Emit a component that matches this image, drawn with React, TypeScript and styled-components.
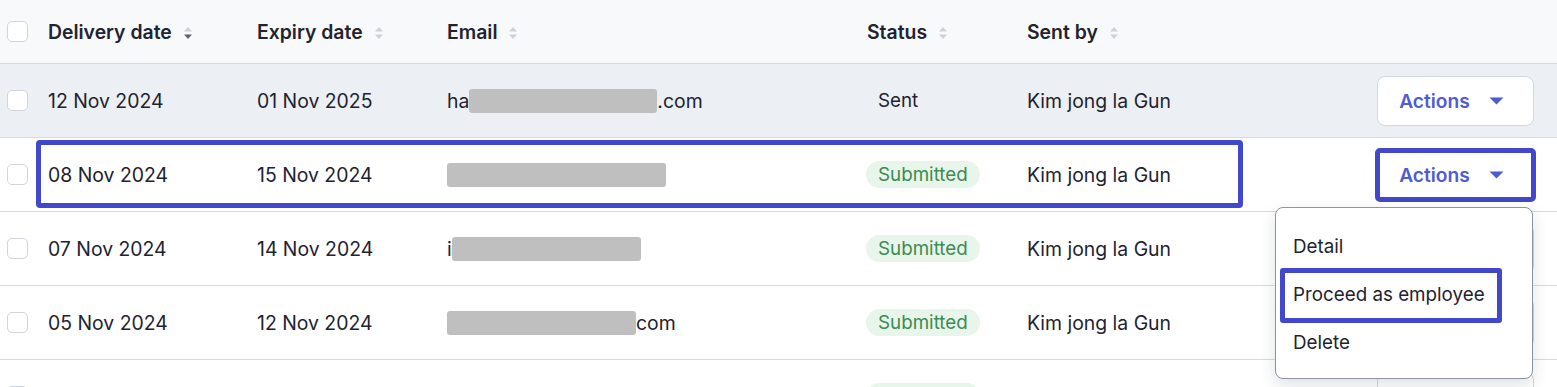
import styled, { createGlobalStyle } from "styled-components";

const GlobalStyle = createGlobalStyle`
  html, body {
    margin: 0;
    padding: 0;
    background: #ffffff;
    font-family: Inter, "Noto Sans", "Liberation Sans", sans-serif;
    color: #1e2330;
    overflow: hidden;
  }
`;

type Invite = {
  delivery: string;
  expiry: string;
  emailHead: string;
  blurWidth: number;
  emailTail: string;
  status: "Sent" | "Submitted";
  sentBy: string;
};

const rows: Invite[] = [
  { delivery: "12 Nov 2024", expiry: "01 Nov 2025", emailHead: "ha", blurWidth: 188, emailTail: ".com", status: "Sent", sentBy: "Kim jong la Gun" },
  { delivery: "08 Nov 2024", expiry: "15 Nov 2024", emailHead: "", blurWidth: 219, emailTail: "", status: "Submitted", sentBy: "Kim jong la Gun" },
  { delivery: "07 Nov 2024", expiry: "14 Nov 2024", emailHead: "i", blurWidth: 189, emailTail: "", status: "Submitted", sentBy: "Kim jong la Gun" },
  { delivery: "05 Nov 2024", expiry: "12 Nov 2024", emailHead: "", blurWidth: 189, emailTail: "com", status: "Submitted", sentBy: "Kim jong la Gun" },
  { delivery: "", expiry: "", emailHead: "", blurWidth: 0, emailTail: "", status: "Submitted", sentBy: "" },
];

const SortIcon = ({ active }: { active?: boolean }) => (
  <SortSvg width="10" height="14" viewBox="0 0 10 14">
    <path d="M5 1 L9 5.5 H1 Z" fill="#cdd1d8" />
    <path d="M1 8.5 H9 L5 13 Z" fill={active ? "#5d6372" : "#cdd1d8"} />
  </SortSvg>
);

const Caret = () => (
  <svg width="15" height="8" viewBox="0 0 15 8">
    <path d="M0.5 0.5 H14.5 L7.5 7.5 Z" fill="#4f5bd5" />
  </svg>
);

export default function App() {
  return (
    <>
      <GlobalStyle />
      <Table>
        <HeaderRow>
          <CheckCell>
            <Checkbox />
          </CheckCell>
          <HeadCell>
            Delivery date <SortIcon active />
          </HeadCell>
          <HeadCell>
            Expiry date <SortIcon />
          </HeadCell>
          <HeadCell>
            Email <SortIcon />
          </HeadCell>
          <HeadCell>
            Status <SortIcon />
          </HeadCell>
          <HeadCell>
            Sent by <SortIcon />
          </HeadCell>
          <HeadCell />
        </HeaderRow>
        {rows.map((r, i) => (
          <Row key={i} $hover={i === 0}>
            {i === 1 && <RowHighlight />}
            <CheckCell>
              <Checkbox />
            </CheckCell>
            <Cell>{r.delivery}</Cell>
            <Cell>{r.expiry}</Cell>
            <Cell>
              {r.emailHead}
              {r.blurWidth > 0 && <Blur style={{ width: r.blurWidth }} />}
              {r.emailTail}
            </Cell>
            <Cell $offset>
              <Badge $tone={r.status === "Submitted" ? "green" : "plain"}>{r.status}</Badge>
            </Cell>
            <Cell>{r.sentBy}</Cell>
            <ActionCell>
              <ActionsButton $open={i === 1}>
                Actions <Caret />
              </ActionsButton>
              {i === 1 && (
                <Menu>
                  <MenuItem>Detail</MenuItem>
                  <MenuItem>
                    <ItemHighlight />
                    Proceed as employee
                  </MenuItem>
                  <MenuItem>Delete</MenuItem>
                </Menu>
              )}
            </ActionCell>
          </Row>
        ))}
      </Table>
    </>
  );
}

const Table = styled.div`
  width: 1557px;
  display: flex;
  flex-direction: column;
`;

const columns = "48px 209px 190px 420px 160px 1fr 180px";

const HeaderRow = styled.div`
  display: grid;
  grid-template-columns: ${columns};
  height: 63px;
  align-items: center;
  background: #f8f9fb;
  border-bottom: 1px solid #d6dae1;
  flex-shrink: 0;
`;

const Row = styled.div<{ $hover?: boolean }>`
  position: relative;
  display: grid;
  grid-template-columns: ${columns};
  height: 73px;
  align-items: center;
  background: ${(p) => (p.$hover ? "#eceff3" : "#ffffff")};
  border-bottom: 1px solid #d6dae1;
  flex-shrink: 0;
`;

const CheckCell = styled.div`
  display: flex;
  align-items: center;
  padding-left: 7px;
`;

const Checkbox = styled.span`
  display: block;
  width: 21px;
  height: 21px;
  box-sizing: border-box;
  border: 1.5px solid #d0d5dd;
  border-radius: 5px;
  background: #ffffff;
`;

const HeadCell = styled.div`
  display: flex;
  align-items: center;
  gap: 11px;
  font-size: 19.4px;
  font-weight: 600;
  color: #1f2430;
  white-space: nowrap;
`;

const SortSvg = styled.svg`
  flex-shrink: 0;
  margin-top: 2px;
`;

const Cell = styled.div<{ $offset?: boolean }>`
  display: flex;
  align-items: center;
  font-size: 19.4px;
  color: #1e2330;
  white-space: nowrap;
  margin-left: ${(p) => (p.$offset ? "-1px" : "0")};
`;

const Blur = styled.span`
  display: inline-block;
  height: 24px;
  background: #bfbfbf;
  border-radius: 3px;
`;

const Badge = styled.span<{ $tone: "green" | "plain" }>`
  display: inline-flex;
  align-items: center;
  height: 27px;
  padding: 0 12px;
  border-radius: 14px;
  font-size: 18.8px;
  background: ${(p) => (p.$tone === "green" ? "#e7f5ea" : "transparent")};
  color: ${(p) => (p.$tone === "green" ? "#3d8c52" : "#1e2330")};
`;

const ActionCell = styled.div`
  position: relative;
  display: flex;
  justify-content: flex-end;
  padding-right: 23px;
`;

const ActionsButton = styled.button<{ $open?: boolean }>`
  display: flex;
  align-items: center;
  justify-content: center;
  gap: 19px;
  width: 157px;
  height: 50px;
  box-sizing: border-box;
  background: #ffffff;
  border: 1px solid #d3d8df;
  border-radius: 8px;
  font-family: inherit;
  font-size: 19.2px;
  font-weight: 600;
  color: #4f5bd5;
  padding: 0 8px 0 0;
  outline: ${(p) => (p.$open ? "5px solid #4148cc" : "none")};
  outline-offset: -3px;
  ${(p) => p.$open && "border-radius: 3px;"}
`;

const Menu = styled.div`
  position: absolute;
  top: 57px;
  right: 24px;
  width: 258px;
  box-sizing: border-box;
  padding: 15px 0 11px;
  background: #ffffff;
  border: 1px solid #8c95a6;
  border-radius: 8px;
  box-shadow: 0 6px 16px rgba(30, 40, 60, 0.14);
  z-index: 5;
`;

const MenuItem = styled.div`
  position: relative;
  height: 48px;
  display: flex;
  align-items: center;
  padding-left: 17px;
  font-size: 18.8px;
  color: #1e2330;
  white-space: nowrap;
`;

const ItemHighlight = styled.span`
  position: absolute;
  left: 4px;
  top: -3px;
  width: 222px;
  height: 55px;
  box-sizing: border-box;
  border: 5px solid #4148cc;
  border-radius: 3px;
  pointer-events: none;
`;

const RowHighlight = styled.span`
  position: absolute;
  left: 36px;
  top: 2px;
  width: 1207px;
  height: 68px;
  box-sizing: border-box;
  border: 5px solid #4148cc;
  border-radius: 4px;
  pointer-events: none;
`;
